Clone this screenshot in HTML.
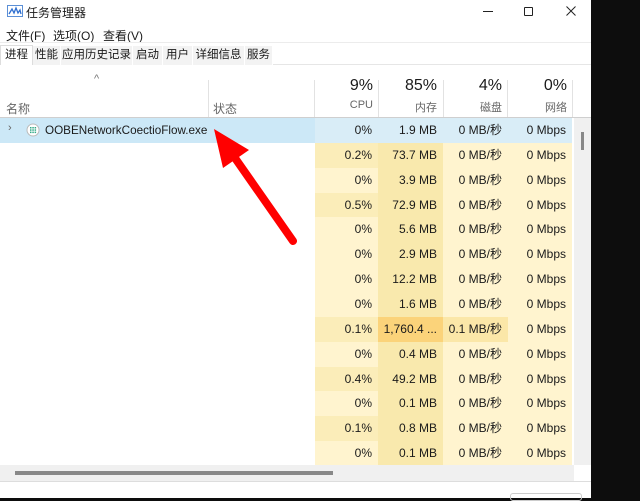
<!DOCTYPE html>
<html><head><meta charset="utf-8"><style>
*{margin:0;padding:0;box-sizing:border-box}
body{width:640px;height:498px;background:#0d0d0d;position:relative;overflow:hidden;font-family:"Liberation Sans","Noto Sans CJK SC",sans-serif;color:#1a1a1a}
.win{position:absolute;left:0;top:0;width:591px;height:498px;background:#fff}
.a{position:absolute;white-space:nowrap}
.t{font-size:12px}
.tab{position:absolute;top:46px;height:19px;line-height:19px;font-size:11.5px;text-align:center;background:#f3f3f3;border-right:1px solid #fff}
.row{position:absolute;left:0;width:572px;height:25px}
.c{position:absolute;top:0;height:25px;line-height:25px;font-size:12px;text-align:right;padding-right:6px}
</style></head><body>
<div class="win">
 <svg class="a" style="left:7px;top:5px" width="16" height="12" viewBox="0 0 16 12"><rect x="0.5" y="0.5" width="15" height="11" fill="#fff" stroke="#5b8fd6"/><path d="M2 9 L5 4 L7 8 L9 3 L11 8 L13 5 L14 9" fill="none" stroke="#2f6fd0" stroke-width="1.3"/></svg>
 <div class="a t" style="left:26px;top:4px">任务管理器</div>
 <div class="a" style="left:483px;top:11px;width:10px;height:1px;background:#222"></div>
 <div class="a" style="left:524px;top:7px;width:9px;height:9px;border:1px solid #222;border-radius:1px"></div>
 <svg class="a" style="left:566px;top:6px" width="10" height="10" viewBox="0 0 10 10"><path d="M0.5 0.5 L9.5 9.5 M9.5 0.5 L0.5 9.5" stroke="#222" stroke-width="1"/></svg>
 <div class="a t" style="left:6px;top:27px">文件(F)</div>
 <div class="a t" style="left:53px;top:27px">选项(O)</div>
 <div class="a t" style="left:103px;top:27px">查看(V)</div>
 <div class="a" style="left:0;top:42px;width:591px;height:1px;background:#ececec"></div>
 <div class="a" style="left:0;top:64px;width:591px;height:1px;background:#e6e6e6"></div>
 <div class="tab" style="left:0;width:33px;background:#fff;border:1px solid #ddd;border-bottom:none;top:45px;height:20px">进程</div>
 <div class="tab" style="left:33px;width:28px">性能</div>
 <div class="tab" style="left:61px;width:72px">应用历史记录</div>
 <div class="tab" style="left:133px;width:30px">启动</div>
 <div class="tab" style="left:163px;width:30px">用户</div>
 <div class="tab" style="left:193px;width:52px">详细信息</div>
 <div class="tab" style="left:245px;width:28px">服务</div>
 <div class="a" style="left:94px;top:73px;font-size:11px;color:#777">^</div>
 <div class="a t" style="left:6px;top:100px;color:#666">名称</div>
 <div class="a" style="left:208px;top:80px;width:1px;height:37px;background:#e2e2e2"></div>
 <div class="a t" style="left:213px;top:100px;color:#666">状态</div>
 <div class="a" style="left:314px;top:80px;width:1px;height:37px;background:#e2e2e2"></div>
 <div class="a" style="left:378px;top:80px;width:1px;height:37px;background:#e2e2e2"></div>
 <div class="a" style="left:443px;top:80px;width:1px;height:37px;background:#e2e2e2"></div>
 <div class="a" style="left:507px;top:80px;width:1px;height:37px;background:#e2e2e2"></div>
 <div class="a" style="left:572px;top:80px;width:1px;height:37px;background:#e2e2e2"></div>
 <div class="a" style="left:315px;top:77px;width:58px;text-align:right;font-size:16px">9%</div>
 <div class="a" style="left:379px;top:77px;width:58px;text-align:right;font-size:16px">85%</div>
 <div class="a" style="left:444px;top:77px;width:58px;text-align:right;font-size:16px">4%</div>
 <div class="a" style="left:508px;top:77px;width:59px;text-align:right;font-size:16px">0%</div>
 <div class="a" style="left:315px;top:99px;width:58px;text-align:right;font-size:11px;color:#666">CPU</div>
 <div class="a" style="left:379px;top:99px;width:58px;text-align:right;font-size:11px;color:#666">内存</div>
 <div class="a" style="left:444px;top:99px;width:58px;text-align:right;font-size:11px;color:#666">磁盘</div>
 <div class="a" style="left:508px;top:99px;width:59px;text-align:right;font-size:11px;color:#666">网络</div>
 <div class="a" style="left:0;top:117px;width:591px;height:1px;background:#cfcfcf"></div>
 <div id="rows"></div>
 <div class="a" style="left:574px;top:118px;width:17px;height:347px;background:#f0f0f0"></div>
 <div class="a" style="left:581px;top:132px;width:3px;height:18px;background:#888"></div>
 <div class="a" style="left:0;top:465px;width:574px;height:16px;background:#f0f0f0"></div>
 <div class="a" style="left:15px;top:471px;width:318px;height:4px;background:#888"></div>
 <div class="a" style="left:0;top:481px;width:591px;height:1px;background:#ddd"></div>
 <div class="a" style="left:510px;top:493px;width:72px;height:8px;border:1px solid #ccc;border-radius:3px"></div>
 <svg class="a" style="left:0;top:0" width="591" height="498"><line x1="293" y1="241" x2="235" y2="158" stroke="#f00" stroke-width="8" stroke-linecap="round"/><polygon points="214,129 249,150 223,168" fill="#f00"/></svg>
</div>
<script>
var d=[["0%","1.9 MB","0 MB/秒"],["0.2%","73.7 MB","0 MB/秒"],["0%","3.9 MB","0 MB/秒"],["0.5%","72.9 MB","0 MB/秒"],["0%","5.6 MB","0 MB/秒"],["0%","2.9 MB","0 MB/秒"],["0%","12.2 MB","0 MB/秒"],["0%","1.6 MB","0 MB/秒"],["0.1%","1,760.4 ...","0.1 MB/秒"],["0%","0.4 MB","0 MB/秒"],["0.4%","49.2 MB","0 MB/秒"],["0%","0.1 MB","0 MB/秒"],["0.1%","0.8 MB","0 MB/秒"],["0%","0.1 MB","0 MB/秒"]];
var h="";
d.forEach(function(r,i){
 var y=118+i*24.85;
 var sel=i==0;
 var cb=sel?"#d9edf7":(r[0]=="0%"?"#fff4cf":"#fbedb9");
 var mb=sel?"#d9edf7":(i==8?"#fbd37a":"#f9e9ad");
 var db=sel?"#d9edf7":(i==8?"#fbe7a8":"#fff4cf");
 var nb=sel?"#d9edf7":"#fff4cf";
 h+='<div class="row" style="top:'+y+'px;'+(sel?'background:#cce8f7;':'')+'">';
 if(sel){h+='<div class="a" style="left:8px;top:4px;font-size:11px;color:#666">›</div><svg class="a" style="left:26px;top:5px" width="14" height="14" viewBox="0 0 14 14"><circle cx="7" cy="7" r="6" fill="#fff" stroke="#bbb"/><g fill="#3a8"><rect x="4" y="4" width="1.5" height="1.5"/><rect x="6.3" y="4" width="1.5" height="1.5"/><rect x="8.6" y="4" width="1.5" height="1.5"/><rect x="4" y="6.3" width="1.5" height="1.5"/><rect x="6.3" y="6.3" width="1.5" height="1.5"/><rect x="8.6" y="6.3" width="1.5" height="1.5"/><rect x="4" y="8.6" width="1.5" height="1.5"/><rect x="6.3" y="8.6" width="1.5" height="1.5"/><rect x="8.6" y="8.6" width="1.5" height="1.5"/></g></svg><div class="a" style="left:45px;top:0;line-height:25px;font-size:11.7px">OOBENetworkCoectioFlow.exe</div>';}
 h+='<div class="c" style="left:315px;width:63px;background:'+cb+'">'+r[0]+'</div>';
 h+='<div class="c" style="left:378px;width:65px;background:'+mb+'">'+r[1]+'</div>';
 h+='<div class="c" style="left:443px;width:65px;background:'+db+'">'+r[2]+'</div>';
 h+='<div class="c" style="left:508px;width:64px;background:'+nb+'">0 Mbps</div>';
 h+='</div>';
});
document.getElementById("rows").innerHTML=h;
</script>
</body></html>
